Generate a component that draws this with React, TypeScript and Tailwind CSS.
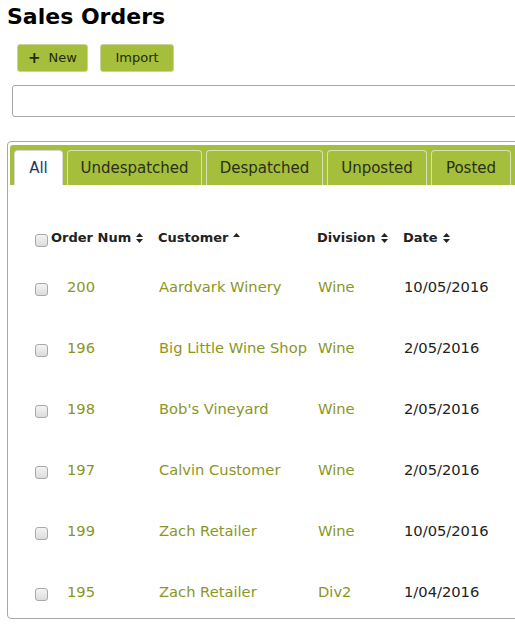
import React from 'react';

const rows = [
  { num: '200', customer: 'Aardvark Winery', division: 'Wine', date: '10/05/2016' },
  { num: '196', customer: 'Big Little Wine Shop', division: 'Wine', date: '2/05/2016' },
  { num: '198', customer: "Bob's Vineyard", division: 'Wine', date: '2/05/2016' },
  { num: '197', customer: 'Calvin Customer', division: 'Wine', date: '2/05/2016' },
  { num: '199', customer: 'Zach Retailer', division: 'Wine', date: '10/05/2016' },
  { num: '195', customer: 'Zach Retailer', division: 'Div2', date: '1/04/2016' },
];

const tabs = [
  { label: 'All', w: 'w-[49px]' },
  { label: 'Undespatched', w: 'w-[135px]' },
  { label: 'Despatched', w: 'w-[117px]' },
  { label: 'Unposted', w: 'w-[100px]' },
  { label: 'Posted', w: 'w-[80px]' },
];

function Check() {
  return (
    <span className="mt-[4px] block h-[13px] w-[13px] rounded-[3px] border border-[#a9a9a9] bg-gradient-to-b from-[#f4f4f4] to-[#dcdcdc]" />
  );
}

function Sort({ dir }: { dir?: 'up' }) {
  return (
    <svg width="7" height="10" viewBox="0 0 7 10" className="ml-[5px] inline-block">
      <path d="M0 4 L3.5 0 L7 4 Z" fill="#222" />
      {dir !== 'up' && <path d="M0 6 L3.5 10 L7 6 Z" fill="#222" />}
    </svg>
  );
}

export default function App() {
  return (
    <div className="h-[626px] w-[515px] overflow-hidden bg-white font-['DejaVu_Sans',Verdana,sans-serif] text-[#222]">
      <h1 className="pl-[7px] pt-[4px] text-[22px] font-bold leading-[26px] text-black">Sales Orders</h1>

      <div className="mt-[14px] flex gap-[12px] pl-[17px]">
        <button className="flex h-[28px] w-[71px] items-center justify-center gap-[8px] rounded-[3px] border border-[#c9d39a] bg-[#a5be3b] text-[13px] text-[#1f2a10]">
          <span className="text-[15px] font-bold leading-none">+</span>
          <span>New</span>
        </button>
        <button className="flex h-[28px] w-[74px] items-center justify-center rounded-[3px] border border-[#c9d39a] bg-[#a5be3b] text-[13px] text-[#1f2a10]">
          Import
        </button>
      </div>

      <div className="ml-[12px] mt-[13px] h-[32px] w-[560px] rounded-[3px] border border-[#a8a8a8] bg-white" />

      <div className="ml-[7px] mt-[24px] h-[478px] w-[560px] rounded-[4px] border border-[#a8a8a8] pl-[2px] pt-[3px]">
        <div className="flex h-[40px] gap-[4px] rounded-t-[3px] bg-[#a5be3b] pl-[4px] pt-[5px]">
          {tabs.map((t, i) => (
            <div
              key={t.label}
              className={`${t.w} flex h-[35px] items-center justify-center rounded-t-[4px] border border-b-0 text-[15px] ${
                i === 0 ? 'border-[#d8d8d8] bg-white text-[#1a3a66]' : 'border-[#d9e0b8] bg-[#a5be3b] text-[#2a2f18]'
              }`}
            >
              {t.label}
            </div>
          ))}
        </div>

        <div className="mt-[41px] grid h-[24px] grid-cols-[16px_107px_159px_86px_1fr] items-center pl-[25px] text-[13px] font-bold">
          <Check />
          <span className="flex items-center">
            Order Num
            <Sort />
          </span>
          <span className="flex items-center">
            Customer
            <Sort dir="up" />
          </span>
          <span className="flex items-center">
            Division
            <Sort />
          </span>
          <span className="flex items-center">
            Date
            <Sort />
          </span>
        </div>

        <div className="mt-[7px]">
          {rows.map((r, i) => (
            <div
              key={i}
              className="grid h-[61px] grid-cols-[16px_108px_159px_86px_1fr] items-center pl-[25px] text-[14.7px]"
            >
              <Check />
              <span className="pl-[16px] text-[#8a9624]">{r.num}</span>
              <span className="text-[#8a9624]">{r.customer}</span>
              <span className="text-[#8a9624]">{r.division}</span>
              <span className="text-[#222]">{r.date}</span>
            </div>
          ))}
        </div>
      </div>
    </div>
  );
}
